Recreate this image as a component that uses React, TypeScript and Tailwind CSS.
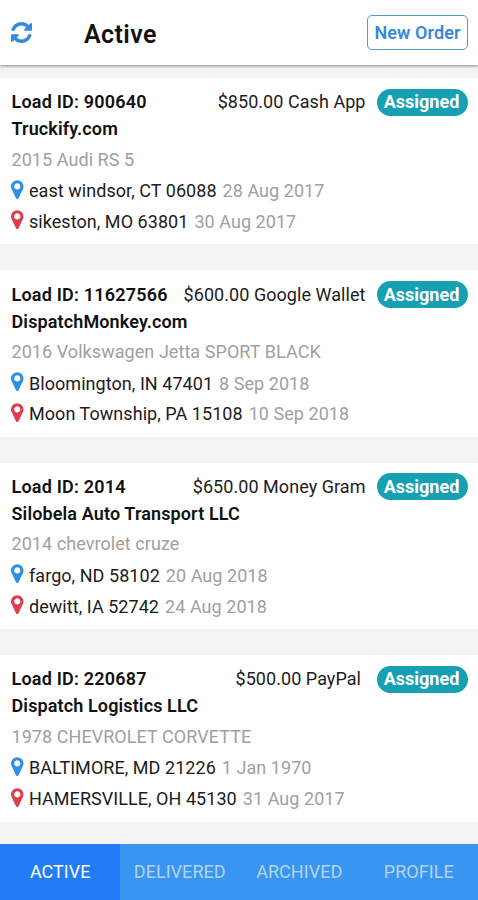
import { useState } from "react";
import clsx from "clsx";

type Stop = { place: string; date: string };

type Load = {
  id: string;
  payment: string;
  company: string;
  vehicle: string;
  pickup: Stop;
  delivery: Stop;
};

const loads: Load[] = [
  {
    id: "900640",
    payment: "$850.00 Cash App",
    company: "Truckify.com",
    vehicle: "2015 Audi RS 5",
    pickup: { place: "east windsor, CT 06088", date: "28 Aug 2017" },
    delivery: { place: "sikeston, MO 63801", date: "30 Aug 2017" },
  },
  {
    id: "11627566",
    payment: "$600.00 Google Wallet",
    company: "DispatchMonkey.com",
    vehicle: "2016 Volkswagen Jetta SPORT BLACK",
    pickup: { place: "Bloomington, IN 47401", date: "8 Sep 2018" },
    delivery: { place: "Moon Township, PA 15108", date: "10 Sep 2018" },
  },
  {
    id: "2014",
    payment: "$650.00 Money Gram",
    company: "Silobela Auto Transport LLC",
    vehicle: "2014 chevrolet cruze",
    pickup: { place: "fargo, ND 58102", date: "20 Aug 2018" },
    delivery: { place: "dewitt, IA 52742", date: "24 Aug 2018" },
  },
  {
    id: "220687",
    payment: "$500.00 PayPal ",
    company: "Dispatch Logistics LLC",
    vehicle: "1978 CHEVROLET CORVETTE",
    pickup: { place: "BALTIMORE, MD 21226", date: "1 Jan 1970" },
    delivery: { place: "HAMERSVILLE, OH 45130", date: "31 Aug 2017" },
  },
];

const tabs = ["ACTIVE", "DELIVERED", "ARCHIVED", "PROFILE"];

const RefreshIcon = () => (
  <svg viewBox="0 0 1536 1536" className="size-[21px] fill-[#2f8ce0]" aria-hidden="true">
    <path d="M1511 928q0 5-1 7-64 268-268 434.5t-478 166.5q-146 0-282.5-55t-243.5-157l-129 129q-19 19-45 19t-45-19-19-45v-448q0-26 19-45t45-19h448q26 0 45 19t19 45-19 45l-137 137q71 66 161 102t187 36q134 0 250-65t186-179q11-17 53-117 8-23 30-23h192q13 0 22.5 9.5t9.5 22.5zm25-800v448q0 26-19 45t-45 19h-448q-26 0-45-19t-19-45 19-45l138-138q-148-137-349-137-134 0-250 65t-186 179q-11 17-53 117-8 23-30 23h-199q-13 0-22.5-9.5t-9.5-22.5v-7q65-268 270-434.5t480-166.5q146 0 284 55.5t245 156.5l130-129q19-19 45-19t45 19 19 45z" />
  </svg>
);

const MarkerIcon = ({ className }: { className: string }) => (
  <svg viewBox="0 0 1024 1536" className={clsx("h-[19px] w-[12.5px] shrink-0", className)} aria-hidden="true">
    <path d="M768 512q0-106-75-181t-181-75-181 75-75 181 75 181 181 75 181-75 75-181zm256 0q0 109-33 179l-364 774q-16 33-47.5 52t-67.5 19-67.5-19-46.5-52l-365-774q-33-70-33-179 0-212 150-362t362-150 362 150 150 362z" />
  </svg>
);

const StopRow = ({ stop, color }: { stop: Stop; color: string }) => (
  <div className="flex h-[30.7px] items-center tracking-[0.05px] whitespace-pre">
    <MarkerIcon className={clsx("-mt-1 mr-[5.5px] -ml-[0.5px]", color)} />
    <span className="text-[#1c1c1c]">{stop.place}</span>
    <span className="ml-1.5 text-[#a0a0a0]">{stop.date}</span>
  </div>
);

const LoadCard = ({ load }: { load: Load }) => (
  <article className="h-[166.4px] shrink-0 bg-white pt-[10.7px] pr-2.5 pl-[11.5px]">
    <div className="flex h-[27px] items-center">
      <h2 className="font-semibold tracking-[0.2px]">Load ID: {load.id}</h2>
      <span className="ml-auto tracking-[0.05px] whitespace-pre text-[#1c1c1c]">{load.payment}</span>
      <span className="ml-[11.5px] flex h-[27px] w-[91px] items-center justify-center rounded-full bg-[#179fb3] pr-[2px] font-bold text-white">
        Assigned
      </span>
    </div>
    <h3 className="flex h-[27px] items-center font-semibold tracking-[0.12px]">{load.company}</h3>
    <p className="flex h-[34px] items-center tracking-[0.06px] text-[#a0a0a0]">{load.vehicle}</p>
    <div className="-mt-[0.9px]">
      <StopRow stop={load.pickup} color="fill-[#2e8fe8]" />
      <StopRow stop={load.delivery} color="fill-[#e03c4c]" />
    </div>
  </article>
);

const App = () => {
  const [activeTab, setActiveTab] = useState("ACTIVE");

  return (
    <div className="flex h-[900px] w-full flex-col overflow-hidden bg-[#f3f3f3] font-['Roboto',sans-serif] text-[18px] leading-none text-[#111]">
      <header className="z-10 flex h-[65px] shrink-0 items-center bg-white pr-2.5 pl-[11px] shadow-[0_1px_3px_rgba(0,0,0,0.45)]">
        <button type="button" aria-label="Refresh">
          <RefreshIcon />
        </button>
        <h1 className="ml-[52px] pt-[3px] text-[25px] font-semibold tracking-[0.4px]">Active</h1>
        <button
          type="button"
          className="ml-auto flex h-[35px] w-[101px] items-center justify-center rounded-[5px] border border-[#4a9cc9] font-semibold tracking-[0.1px] whitespace-nowrap text-[#3489dc]"
        >
          New Order
        </button>
      </header>
      <main className="flex min-h-0 flex-1 flex-col gap-[26px] overflow-hidden pt-[13px]">
        {loads.map((load) => (
          <LoadCard key={load.id} load={load} />
        ))}
      </main>
      <nav className="grid h-[56px] shrink-0 grid-cols-4 bg-[#3896f0]">
        {tabs.map((tab) => (
          <button
            key={tab}
            type="button"
            onClick={() => setActiveTab(tab)}
            className={clsx(
              "pl-px text-[18px] tracking-[0.05px]",
              tab === activeTab ? "bg-[#227cf5] text-white" : "text-[#b5d4f4]"
            )}
          >
            {tab}
          </button>
        ))}
      </nav>
    </div>
  );
};

export default App;
